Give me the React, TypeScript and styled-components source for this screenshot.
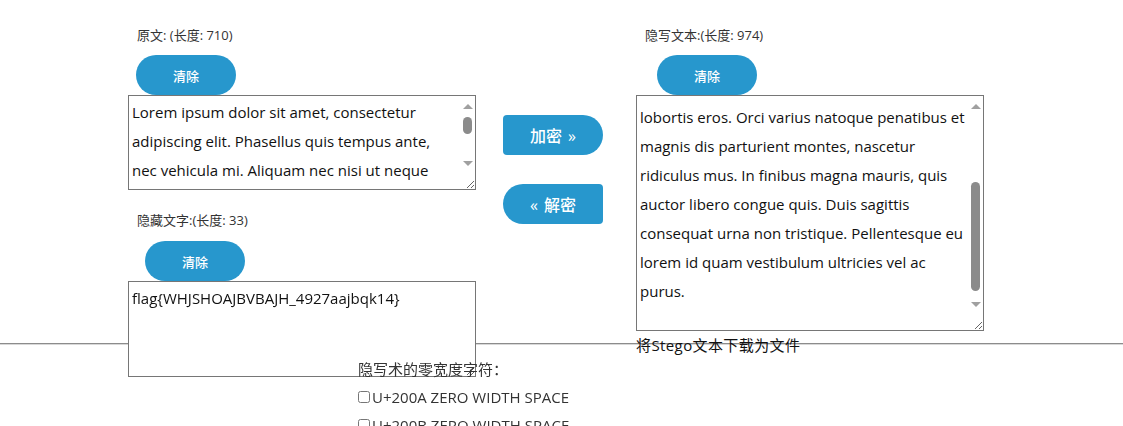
import React, { useLayoutEffect, useRef, useState } from 'react';
import styled, { createGlobalStyle } from 'styled-components';

const GlobalStyle = createGlobalStyle`
  body {
    margin: 0;
    background: #ffffff;
    font-family: 'Open Sans', 'Noto Sans CJK SC', sans-serif;
    color: #222;
  }
`;

const ORIGINAL = [
  'Lorem ipsum dolor sit amet, consectetur',
  'adipiscing elit. Phasellus quis tempus ante,',
  'nec vehicula mi. Aliquam nec nisi ut neque',
  'interdum auctor. Aliquam felis orci, vestibulum',
  'sit amet ante at, consectetur lobortis eros.',
  'Orci varius natoque penatibus et magnis dis',
  'parturient montes, nascetur ridiculus mus. In',
  'finibus magna mauris, quis auctor libero congue',
  'quis. Duis sagittis consequat urna non tristique.',
  'Pellentesque eu lorem id quam vestibulum',
  'ultricies vel ac purus.',
].join('\n');

const STEGO = [
  'Lorem ipsum dolor sit amet, consectetur',
  'adipiscing elit. Phasellus quis tempus ante,',
  'nec vehicula mi. Aliquam nec nisi ut neque',
  'interdum auctor. Aliquam felis orci, vestibulum',
  'sit amet ante at, consectetur',
  'lobortis eros. Orci varius natoque penatibus et',
  'magnis dis parturient montes, nascetur',
  'ridiculus mus. In finibus magna mauris, quis',
  'auctor libero congue quis. Duis sagittis',
  'consequat urna non tristique. Pellentesque eu',
  'lorem id quam vestibulum ultricies vel ac',
  'purus.',
  '',
].join('\n');

const HIDDEN = 'flag{WHJSHOAJBVBAJH_4927aajbqk14}';

type Thumb = { top: number; size: number; visible: boolean };

type BoxProps = {
  height: number;
  value: string;
  initialScroll?: number;
};

// textarea + a drawn scrollbar (the headless page hides native ones)
const ScrollingTextBox: React.FC<BoxProps> = ({
  height,
  value,
  initialScroll = 0,
}) => {
  const boxRef = useRef<HTMLTextAreaElement>(null);
  const trackRef = useRef<HTMLDivElement>(null);
  const [thumb, setThumb] = useState<Thumb>({
    top: 0,
    size: 17,
    visible: false,
  });

  const measure = () => {
    const box = boxRef.current;
    const track = trackRef.current;
    if (!box || !track) return;
    const { scrollHeight, clientHeight, scrollTop } = box;
    const trackLen = track.clientHeight;
    const size = Math.max(
      17,
      Math.round((trackLen * clientHeight) / scrollHeight)
    );
    const max = scrollHeight - clientHeight;
    const top = max > 0 ? Math.round(((trackLen - size) * scrollTop) / max) : 0;
    setThumb({ top, size, visible: max > 0 });
  };

  useLayoutEffect(() => {
    if (boxRef.current) boxRef.current.scrollTop = initialScroll;
    measure();
  }, []);

  return (
    <BoxFrame $height={height}>
      <TextBox
        ref={boxRef}
        defaultValue={value}
        spellCheck={false}
        onScroll={measure}
      />
      <ScrollRail $visible={thumb.visible}>
        <RailButton>
          <Arrow $dir="up" />
        </RailButton>
        <RailTrack ref={trackRef}>
          <RailThumb style={{ top: thumb.top, height: thumb.size }} />
        </RailTrack>
        <RailButton>
          <Arrow $dir="down" />
        </RailButton>
      </ScrollRail>
    </BoxFrame>
  );
};

const App: React.FC = () => {
  return (
    <>
      <GlobalStyle />
      <Workspace>
        <Column>
          <FieldLabel>原文: (长度: 710)</FieldLabel>
          <ClearButton $indent={8}>清除</ClearButton>
          <ScrollingTextBox height={95} value={ORIGINAL} />
          <FieldLabel $gap={22}>隐藏文字:(长度: 33)</FieldLabel>
          <ClearButton $indent={17} $gap={13}>
            清除
          </ClearButton>
          <ScrollingTextBox height={96} value={HIDDEN} />
        </Column>

        <Actions>
          <ActionButton $direction="forward">加密 »</ActionButton>
          <ActionButton $direction="back">« 解密</ActionButton>
        </Actions>

        <Column $offset={33}>
          <FieldLabel>隐写文本:(长度: 974)</FieldLabel>
          <ClearButton $indent={21}>清除</ClearButton>
          <ScrollingTextBox height={236} value={STEGO} initialScroll={140} />
          <DownloadLink>将Stego文本下载为文件</DownloadLink>
        </Column>
      </Workspace>

      <Divider />

      <Options>
        <OptionTitle>隐写术的零宽度字符：</OptionTitle>
        <OptionRow>
          <input type="checkbox" />
          U+200A ZERO WIDTH SPACE
        </OptionRow>
        <OptionRow>
          <input type="checkbox" />
          U+200B ZERO WIDTH SPACE
        </OptionRow>
      </Options>
    </>
  );
};

const Workspace = styled.div`
  height: 343px;
  display: flex;
  flex-direction: row;
  align-items: flex-start;
  padding-left: 128px;
`;

const Column = styled.div<{ $offset?: number }>`
  width: 348px;
  display: flex;
  flex-direction: column;
  align-items: flex-start;
  padding-top: 27px;
  margin-left: ${({ $offset }) => $offset ?? 0}px;
`;

const FieldLabel = styled.div<{ $gap?: number }>`
  font-size: 13px;
  line-height: 16px;
  color: #333;
  margin: ${({ $gap }) => $gap ?? 0}px 0 0 9px;
`;

const ClearButton = styled.button<{ $indent: number; $gap?: number }>`
  width: 100px;
  height: 40px;
  margin: ${({ $gap }) => $gap ?? 12}px 0 0 ${({ $indent }) => $indent}px;
  border: none;
  border-radius: 20px;
  background: #2797cd;
  color: #fff;
  font-family: inherit;
  font-size: 13px;
  font-weight: 500;
  cursor: pointer;
`;

const BoxFrame = styled.div<{ $height: number }>`
  position: relative;
  width: 348px;
  height: ${({ $height }) => $height}px;
`;

const TextBox = styled.textarea`
  display: block;
  box-sizing: border-box;
  width: 100%;
  height: 100%;
  margin: 0;
  padding: 2px 15px 2px 3px;
  border: 1px solid #767676;
  font-family: inherit;
  font-size: 15px;
  line-height: 29px;
  color: #111;
  white-space: pre;
  overflow-x: hidden;
  overflow-y: auto;
  background: #fff;
`;

const ScrollRail = styled.div<{ $visible: boolean }>`
  position: absolute;
  top: 1px;
  right: 1px;
  bottom: 16px;
  width: 15px;
  display: ${({ $visible }) => ($visible ? 'flex' : 'none')};
  flex-direction: column;
  background: #fff;
  pointer-events: none;
`;

const RailButton = styled.div`
  height: 21px;
  flex: none;
  display: flex;
  align-items: center;
  justify-content: center;
`;

const Arrow = styled.span<{ $dir: 'up' | 'down' }>`
  width: 0;
  height: 0;
  border-left: 5px solid transparent;
  border-right: 5px solid transparent;
  ${({ $dir }) =>
    $dir === 'up'
      ? 'border-bottom: 5px solid #a0a0a0;'
      : 'border-top: 5px solid #a0a0a0;'}
`;

const RailTrack = styled.div`
  position: relative;
  flex: 1;
`;

const RailThumb = styled.div`
  position: absolute;
  left: 3px;
  right: 3px;
  border-radius: 5px;
  background: #8b8b8b;
`;

const Actions = styled.div`
  width: 100px;
  margin-left: 27px;
  padding-top: 115px;
  display: flex;
  flex-direction: column;
  gap: 29px;
`;

const ActionButton = styled.button<{ $direction: 'forward' | 'back' }>`
  width: 100px;
  height: 40px;
  border: none;
  border-radius: ${({ $direction }) =>
    $direction === 'forward' ? '4px 20px 20px 4px' : '20px 4px 4px 20px'};
  background: #2797cd;
  color: #fff;
  font-family: inherit;
  font-size: 16px;
  font-weight: 500;
  word-spacing: 2px;
  cursor: pointer;
`;

const DownloadLink = styled.a`
  display: block;
  margin-top: 4px;
  font-size: 15px;
  line-height: 20px;
  letter-spacing: 0.4px;
  color: #111;
  text-decoration: none;
  cursor: pointer;
`;

const Divider = styled.hr`
  margin: 0;
  border: none;
  border-top: 1px solid #8c8c8c;
  border-bottom: 1px solid #d8d8d8;
`;

/* positioned so its text paints over the overflowing textarea, as in the page */
const Options = styled.div`
  position: relative;
  padding: 10px 0 0 358px;
  font-size: 15px;
  color: #333;
`;

const OptionTitle = styled.div`
  line-height: 28px;
`;

const OptionRow = styled.label`
  display: flex;
  align-items: center;
  height: 28px;
  input {
    width: 12px;
    height: 12px;
    margin: 0 2px 0 0;
  }
`;

export default App;
